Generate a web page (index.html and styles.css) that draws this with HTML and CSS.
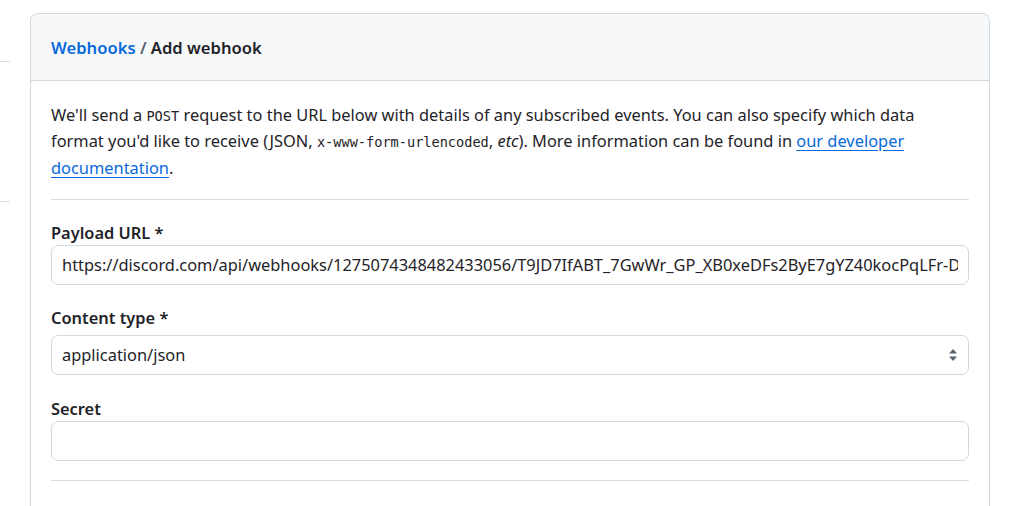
FILE: index.html
```html
<!DOCTYPE html>
<html>
<head>
<meta charset="utf-8">
<link rel="stylesheet" href="styles.css">
</head>
<body>
<div class="page">
  <div class="sidebar">
    <div class="side-item side-first"></div>
    <div class="side-item side-second"></div>
  </div>
  <div class="box">
    <div class="box-header">
      <a class="crumb" href="#">Webhooks</a><span class="sep"> / </span><span class="title">Add webhook</span>
    </div>
    <div class="box-body">
      <p class="intro">We'll send a <code>POST</code> request to the URL below with details of any subscribed events. You can also specify which data format you'd like to receive (JSON, <code>x-www-form-urlencoded</code>, <em>etc</em>). More information can be found in <a href="#">our developer documentation</a>.</p>
      <hr class="rule">
      <div class="field">
        <label class="label">Payload URL *</label>
        <input class="input" type="text" value="https://discord.com/api/webhooks/1275074348482433056/T9JD7IfABT_7GwWr_GP_XB0xeDFs2ByE7gYZ40kocPqLFr-Dq">
      </div>
      <div class="field">
        <label class="label label-ct">Content type *</label>
        <div class="select-wrap">
          <div class="select">application/json</div>
          <svg class="arrows" width="10" height="14" viewBox="0 0 10 14"><path d="M5 1 L9 5.5 H1 Z" fill="#59636e"/><path d="M5 13 L9 8.5 H1 Z" fill="#59636e"/></svg>
        </div>
      </div>
      <div class="field">
        <label class="label label-secret">Secret</label>
        <input class="input" type="text" value="">
      </div>
      <hr class="rule rule-bottom">
    </div>
  </div>
</div>
</body>
</html>
```
FILE: styles.css
```css
html, body {
  margin: 0;
  padding: 0;
  background: #ffffff;
}
body {
  font-family: "Noto Sans", "Open Sans", sans-serif;
  font-size: 16.4px;
  color: #1f2328;
}
.page {
  display: flex;
  gap: 20px;
  padding-top: 13px;
  height: 493px;
  overflow: hidden;
}
.sidebar {
  width: 10px;
  flex: none;
}
.side-item {
  border-bottom: 1px solid #d8dee4;
}
.side-first {
  height: 48px;
}
.side-second {
  height: 139px;
}
.box {
  width: 958px;
  flex: none;
  border: 1px solid #d1d9e0;
  border-bottom: none;
  border-radius: 8px 8px 0 0;
}
.box-header {
  background: #f6f8fa;
  border-bottom: 1px solid #d1d9e0;
  border-radius: 7px 7px 0 0;
  height: 66px;
  display: flex;
  align-items: center;
  padding: 0 20px;
  font-weight: 600;
  font-size: 16.6px;
}
.crumb {
  color: #0969da;
  text-decoration: none;
}
.sep {
  color: #59636e;
  white-space: pre;
}
.title {
  color: #1f2328;
}
.box-body {
  padding: 0 20px;
}
.intro {
  margin: 0;
  padding-top: 21px;
  line-height: 26.3px;
  max-width: 880px;
}
.intro code {
  font-family: "DejaVu Sans Mono", "Liberation Mono", monospace;
  font-size: 13.6px;
  line-height: 1;
}
.intro a {
  color: #0969da;
  text-decoration: underline;
  text-underline-offset: 3px;
}
.rule {
  border: none;
  border-top: 1px solid #d8dee4;
  margin: 18px 0 0;
  height: 0;
}
.field {
  display: flex;
  flex-direction: column;
}
.label {
  font-weight: 600;
  line-height: 20px;
  margin-top: 23px;
  margin-bottom: 2px;
}
.label-ct {
  margin-bottom: 7px;
}
.label-secret {
  margin-top: 24px;
}
.input, .select {
  box-sizing: border-box;
  height: 40px;
  border: 1px solid #d1d9e0;
  border-radius: 7px;
  padding: 0 10px;
  font-family: inherit;
  font-size: 16.4px;
  color: #1f2328;
  background: #ffffff;
  width: 100%;
  outline: none;
}
.select {
  display: flex;
  align-items: center;
}
.select-wrap {
  position: relative;
}
.arrows {
  position: absolute;
  right: 11px;
  top: 13px;
}
.rule-bottom {
  margin-top: 19px;
}
```
